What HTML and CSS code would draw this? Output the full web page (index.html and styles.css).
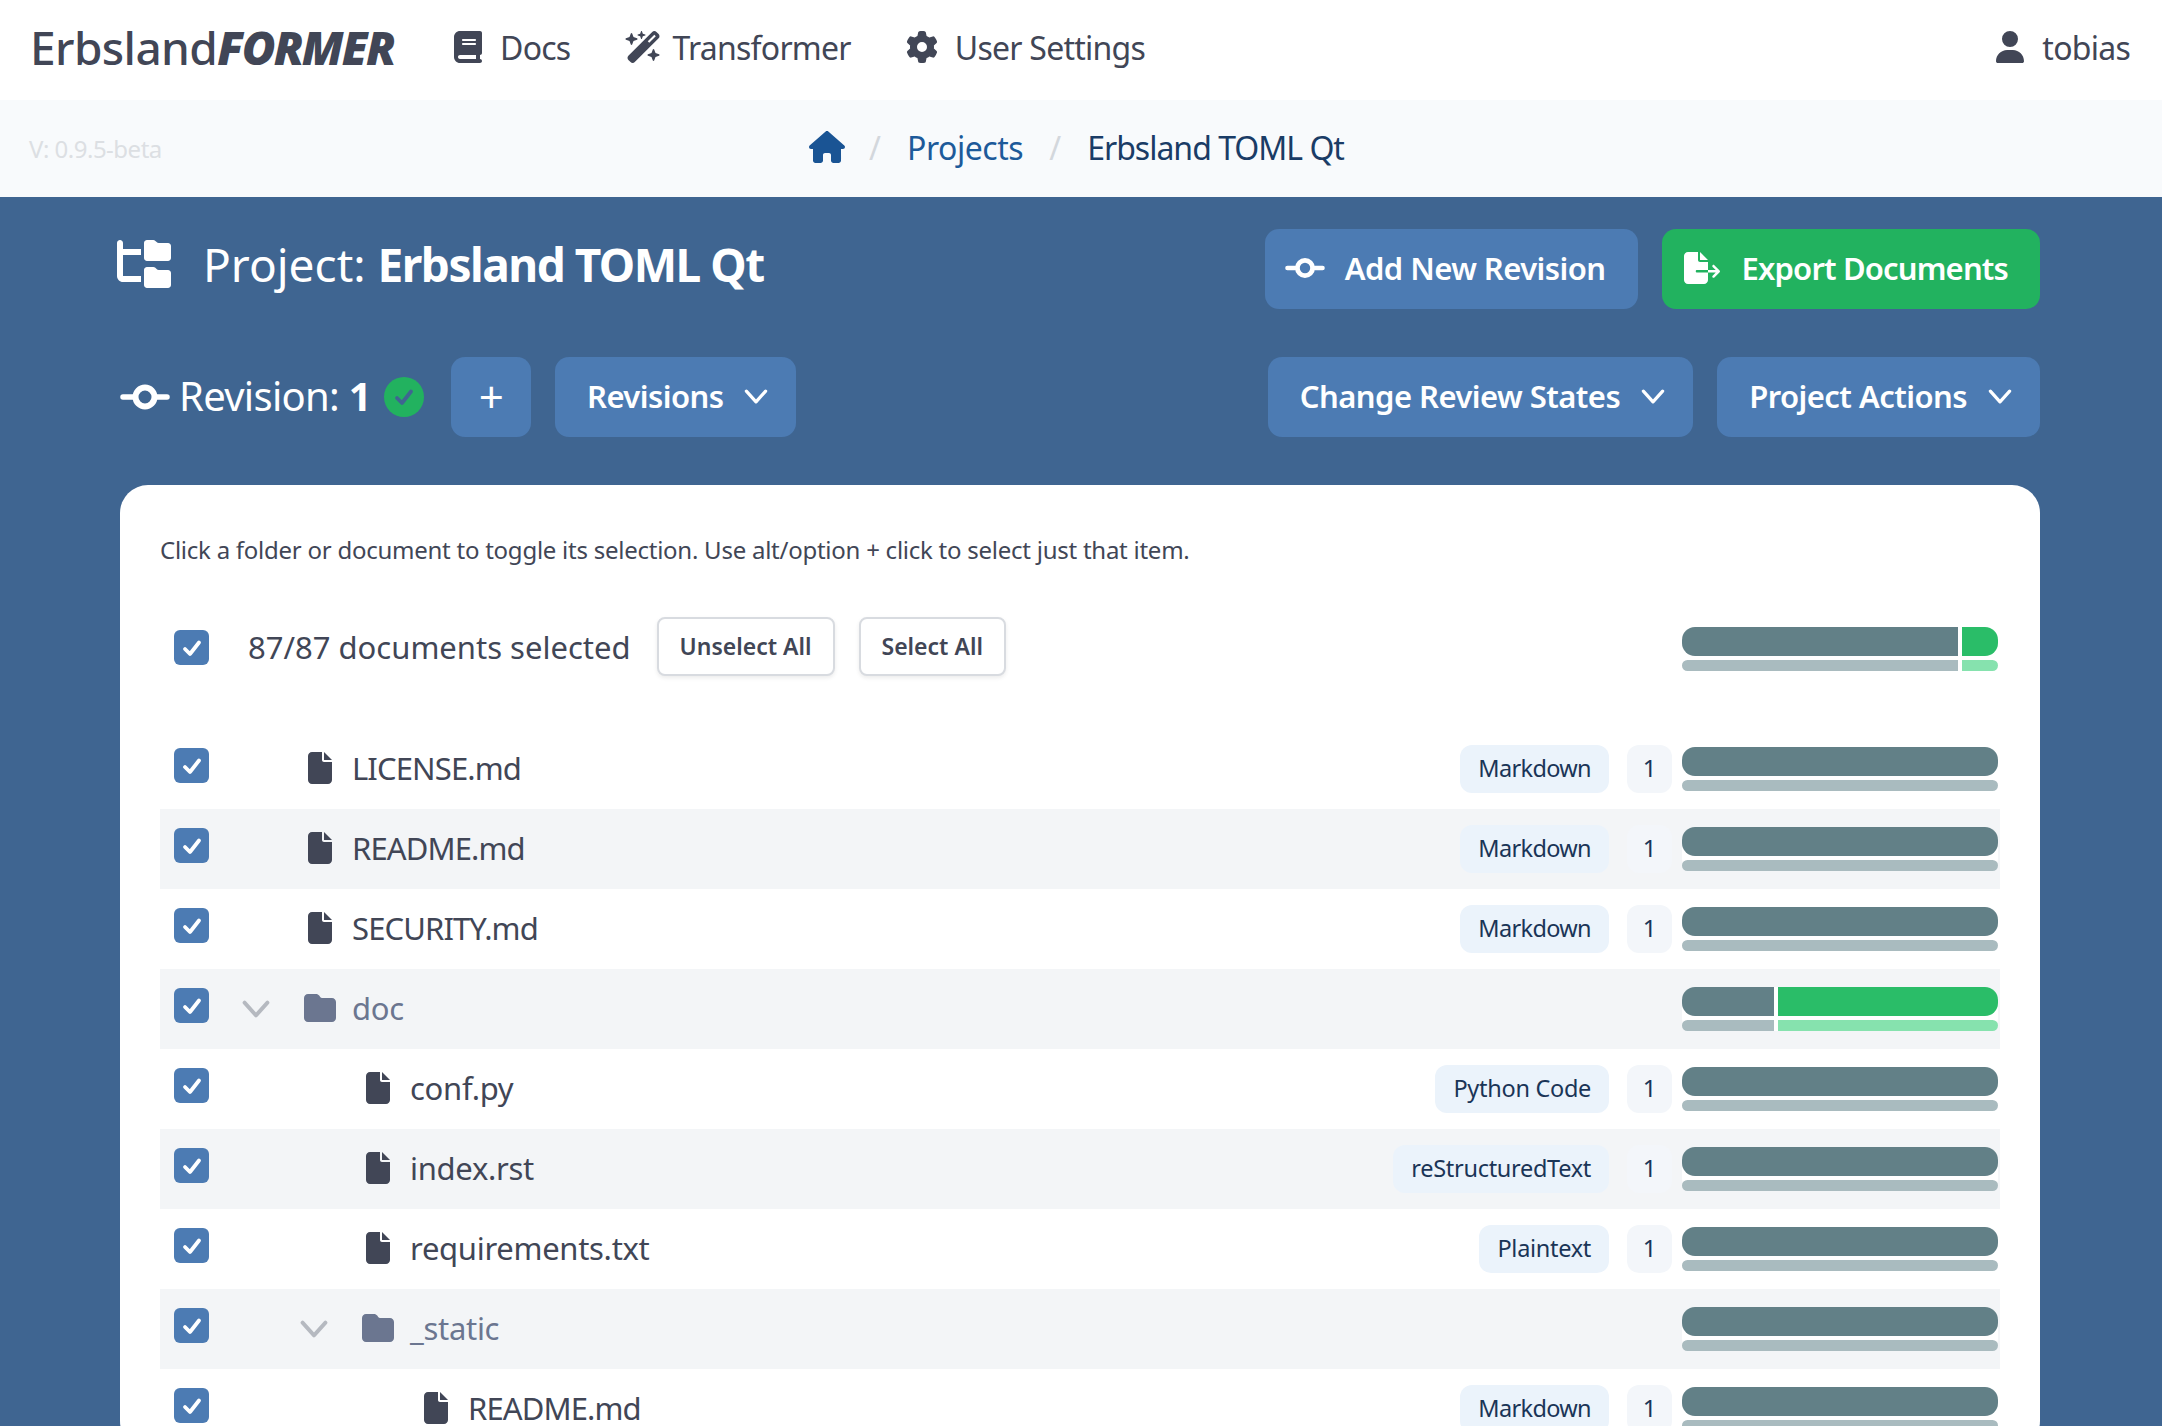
FILE: index.html
```html
<!DOCTYPE html>
<html lang="en">
<head>
    <meta charset="UTF-8">
    <meta name="viewport" content="width=device-width, initial-scale=1.0">
    <title>Erbsland TOML Qt</title>
    <link rel="stylesheet" href="styles.css">
</head>
<body>
    <svg class="icon-sheet" aria-hidden="true">
        <symbol id="i-book" viewBox="0 0 448 512"><path d="M96 0C43 0 0 43 0 96V416c0 53 43 96 96 96H384h32c17.7 0 32-14.3 32-32s-14.3-32-32-32V384c17.7 0 32-14.3 32-32V32c0-17.7-14.3-32-32-32H384 96zm0 384H352v64H96c-17.7 0-32-14.3-32-32s14.3-32 32-32zm32-240c0-8.8 7.2-16 16-16H336c8.8 0 16 7.2 16 16s-7.2 16-16 16H144c-8.8 0-16-7.2-16-16zm16 48H336c8.8 0 16 7.2 16 16s-7.2 16-16 16H144c-8.8 0-16-7.2-16-16s7.2-16 16-16z"/></symbol>
        <symbol id="i-wand" viewBox="0 0 576 512"><path d="M234.7 42.7L197 56.8c-3 1.1-5 4-5 7.2s2 6.1 5 7.2l37.7 14.1L248.8 123c1.1 3 4 5 7.2 5s6.1-2 7.2-5l14.1-37.7L315 71.2c3-1.1 5-4 5-7.2s-2-6.1-5-7.2L277.3 42.7 263.2 5c-1.1-3-4-5-7.2-5s-6.1 2-7.2 5L234.7 42.7zM46.1 395.4c-18.7 18.7-18.7 49.1 0 67.9l34.6 34.6c18.7 18.7 49.1 18.7 67.9 0L529.9 116.5c18.7-18.7 18.7-49.1 0-67.9L495.3 14.1c-18.7-18.7-49.1-18.7-67.9 0L46.1 395.4zM484.6 82.6l-105 105-23.3-23.3 105-105 23.3 23.3zM7.5 117.2C3 118.9 0 123.2 0 128s3 9.1 7.5 10.8L64 160l21.2 56.5c1.7 4.5 6 7.5 10.8 7.5s9.1-3 10.8-7.5L128 160l56.5-21.2c4.5-1.7 7.5-6 7.5-10.8s-3-9.1-7.5-10.8L128 96 106.8 39.5C105.1 35 100.8 32 96 32s-9.1 3-10.8 7.5L64 96 7.5 117.2zm352 256c-4.5 1.7-7.5 6-7.5 10.8s3 9.1 7.5 10.8L416 416l21.2 56.5c1.7 4.5 6 7.5 10.8 7.5s9.1-3 10.8-7.5L480 416l56.5-21.2c4.5-1.7 7.5-6 7.5-10.8s-3-9.1-7.5-10.8L480 352l-21.2-56.5c-1.7-4.5-6-7.5-10.8-7.5s-9.1 3-10.8 7.5L416 352l-56.5 21.2z"/></symbol>
        <symbol id="i-gear" viewBox="0 0 512 512"><path d="M495.9 166.6c3.2 8.7 .5 18.4-6.4 24.6l-43.3 39.4c1.1 8.3 1.7 16.8 1.7 25.4s-.6 17.1-1.7 25.4l43.3 39.4c6.9 6.2 9.6 15.9 6.4 24.6c-4.4 11.9-9.7 23.3-15.8 34.3l-4.7 8.1c-6.6 11-14 21.4-22.1 31.2c-5.9 7.2-15.7 9.6-24.5 6.8l-55.7-17.7c-13.4 10.3-28.2 18.9-44 25.4l-12.5 57.1c-2 9.1-9 16.3-18.2 17.8c-13.8 2.3-28 3.5-42.5 3.5s-28.7-1.2-42.5-3.5c-9.2-1.5-16.2-8.7-18.2-17.8l-12.5-57.1c-15.8-6.5-30.6-15.1-44-25.4L83.1 425.9c-8.8 2.8-18.6 .3-24.5-6.8c-8.1-9.8-15.5-20.2-22.1-31.2l-4.7-8.1c-6.1-11-11.4-22.4-15.8-34.3c-3.2-8.7-.5-18.4 6.4-24.6l43.3-39.4C64.6 273.1 64 264.6 64 256s.6-17.1 1.7-25.4L22.4 191.2c-6.9-6.2-9.6-15.9-6.4-24.6c4.4-11.9 9.7-23.3 15.8-34.3l4.7-8.1c6.6-11 14-21.4 22.1-31.2c5.9-7.2 15.7-9.6 24.5-6.8l55.7 17.7c13.4-10.3 28.2-18.9 44-25.4l12.5-57.1c2-9.1 9-16.3 18.2-17.8C227.3 1.2 241.5 0 256 0s28.7 1.2 42.5 3.5c9.2 1.5 16.2 8.7 18.2 17.8l12.5 57.1c15.8 6.5 30.6 15.1 44 25.4l55.7-17.7c8.8-2.8 18.6-.3 24.5 6.8c8.1 9.8 15.5 20.2 22.1 31.2l4.7 8.1c6.1 11 11.4 22.4 15.8 34.3zM256 336a80 80 0 1 0 0-160 80 80 0 1 0 0 160z"/></symbol>
        <symbol id="i-user" viewBox="0 0 448 512"><path d="M224 256A128 128 0 1 0 224 0a128 128 0 1 0 0 256zm-45.7 48C79.8 304 0 383.8 0 482.3C0 498.7 13.3 512 29.7 512H418.3c16.4 0 29.7-13.3 29.7-29.7C448 383.8 368.2 304 269.7 304H178.3z"/></symbol>
        <symbol id="i-home" viewBox="0 0 576 512"><path d="M575.8 255.5c0 18-15 32.1-32 32.1h-32l.7 160.2c0 2.7-.2 5.4-.5 8.1V472c0 22.1-17.9 40-40 40H456c-1.1 0-2.2 0-3.3-.1c-1.4 .1-2.8 .1-4.2 .1H416 392c-22.1 0-40-17.9-40-40V448 384c0-17.7-14.3-32-32-32H256c-17.7 0-32 14.3-32 32v64 24c0 22.1-17.9 40-40 40H160 128.1c-1.5 0-3-.1-4.5-.2c-1.2 .1-2.4 .2-3.6 .2H104c-22.1 0-40-17.9-40-40V360c0-.9 0-1.9 .1-2.8V287.6H32c-18 0-32-14-32-32.1c0-9 3-17 10-24L266.4 8c7-7 15-8 22-8s15 2 21 7L564.8 231.5c8 7 12 15 11 24z"/></symbol>
        <symbol id="i-tree" viewBox="0 0 576 512"><path d="M64 32C64 14.3 49.7 0 32 0S0 14.3 0 32v96V384c0 35.3 28.7 64 64 64H256V384H64V160H256V96H64V32zM288 192c0 17.7 14.3 32 32 32H544c17.7 0 32-14.3 32-32V64c0-17.7-14.3-32-32-32H445.3c-8.5 0-16.6-3.4-22.6-9.4L409.4 9.4c-6-6-14.1-9.4-22.6-9.4H320c-17.7 0-32 14.3-32 32V192zm0 288c0 17.7 14.3 32 32 32H544c17.7 0 32-14.3 32-32V352c0-17.7-14.3-32-32-32H445.3c-8.5 0-16.6-3.4-22.6-9.4l-13.3-13.3c-6-6-14.1-9.4-22.6-9.4H320c-17.7 0-32 14.3-32 32V480z"/></symbol>
        <symbol id="i-export" viewBox="0 0 576 512"><path d="M0 64C0 28.7 28.7 0 64 0H224V128c0 17.7 14.3 32 32 32H384V288H208c-11 0-20 9-20 20s9 20 20 20H384V448c0 35.3-28.7 64-64 64H64c-35.3 0-64-28.7-64-64V64zM384 328V288H508l-50-50c-8-8-8-20 0-28s20-8 28 0l84 84c8 8 8 20 0 28l-84 84c-8 8-20 8-28 0s-8-20 0-28l50-50H384zm0-200H256V0L384 128z"/></symbol>
        <symbol id="i-file" viewBox="0 0 384 512"><path d="M0 64C0 28.7 28.7 0 64 0H224V128c0 17.7 14.3 32 32 32H384V448c0 35.3-28.7 64-64 64H64c-35.3 0-64-28.7-64-64V64zm384 64H256V0L384 128z"/></symbol>
        <symbol id="i-folder" viewBox="0 0 512 512"><path d="M64 480H448c35.3 0 64-28.7 64-64V160c0-35.3-28.7-64-64-64H288c-10.1 0-19.6-4.7-25.6-12.8L243.2 57.6C231.1 41.5 212.1 32 192 32H64C28.7 32 0 60.7 0 96V416c0 35.3 28.7 64 64 64z"/></symbol>
        <symbol id="i-commit" viewBox="0 0 50 32"><path d="M3 16H13M37 16H47" fill="none" stroke="currentColor" stroke-width="5.500" stroke-linecap="round"/><circle cx="25" cy="16" r="9.500" fill="none" stroke="currentColor" stroke-width="6"/></symbol>
        <symbol id="i-chevron" viewBox="1 1 22 14"><path d="M3 3L12 13L21 3" fill="none" stroke="currentColor" stroke-width="3" stroke-linecap="round" stroke-linejoin="round"/></symbol>
        <symbol id="i-check" viewBox="0 0 20 20"><path d="M3 11L8 16L17 4.500" fill="none" stroke="currentColor" stroke-width="3.800" stroke-linecap="round" stroke-linejoin="round"/></symbol>
    </svg>

    <!-- top navigation -->
    <nav class="topnav">
        <a class="brand">Erbsland<b>FORMER</b></a>
        <a class="nav-link"><svg class="nav-icon book"><use href="#i-book"/></svg>Docs</a>
        <a class="nav-link"><svg class="nav-icon wand"><use href="#i-wand"/></svg>Transformer</a>
        <a class="nav-link"><svg class="nav-icon gear"><use href="#i-gear"/></svg>User Settings</a>
        <a class="nav-link nav-user"><svg class="nav-icon book"><use href="#i-user"/></svg>tobias</a>
    </nav>

    <!-- breadcrumbs -->
    <div class="crumbbar">
        <span class="version">V: 0.9.5-beta</span>
        <div class="crumbs">
            <svg class="crumb-home"><use href="#i-home"/></svg>
            <span class="crumb-sep">/</span>
            <a class="crumb-link">Projects</a>
            <span class="crumb-sep">/</span>
            <span class="crumb-current">Erbsland TOML Qt</span>
        </div>
    </div>

    <main class="project">
        <div class="toolbar">
            <h1 class="project-title"><svg class="title-icon"><use href="#i-tree"/></svg>Project:&nbsp;<b>Erbsland TOML Qt</b></h1>
            <div class="toolbar-buttons">
                <button class="btn btn-icon"><svg class="btn-commit"><use href="#i-commit"/></svg>Add New Revision</button>
                <button class="btn btn-green"><svg class="btn-export"><use href="#i-export"/></svg>Export Documents</button>
            </div>
        </div>

        <div class="toolbar">
            <div class="revision">
                <svg class="revision-icon"><use href="#i-commit"/></svg>
                <span class="revision-label">Revision: <b>1</b></span>
                <span class="revision-ok"><svg><use href="#i-check"/></svg></span>
                <button class="btn btn-plus">+</button>
                <button class="btn">Revisions<svg class="btn-chevron"><use href="#i-chevron"/></svg></button>
            </div>
            <div class="toolbar-buttons">
                <button class="btn">Change Review States<svg class="btn-chevron"><use href="#i-chevron"/></svg></button>
                <button class="btn">Project Actions<svg class="btn-chevron"><use href="#i-chevron"/></svg></button>
            </div>
        </div>

        <section class="card">
            <p class="hint">Click a folder or document to toggle its selection. Use alt/option + click to select just that item.</p>

            <div class="summary">
                <span class="check"><svg><use href="#i-check"/></svg></span>
                <span class="summary-text">87/87 documents selected</span>
                <button class="btn-light">Unselect All</button>
                <button class="btn-light">Select All</button>
                <div class="bar">
                    <div class="bar-main"><i class="seg" style="width: 87.3%"></i><i class="seg seg-done"></i></div>
                    <div class="bar-sub"><i class="seg" style="width: 87.3%"></i><i class="seg seg-done"></i></div>
                </div>
            </div>

            <div class="tree">
                <div class="row">
                    <span class="check"><svg><use href="#i-check"/></svg></span>
                    <span class="twist"></span>
                    <svg class="file-icon"><use href="#i-file"/></svg>
                    <span class="name name-caps">LICENSE.md</span>
                    <span class="type type-md">Markdown</span><span class="count">1</span>
                    <div class="bar"><div class="bar-main"><i class="seg"></i></div><div class="bar-sub"><i class="seg"></i></div></div>
                </div>
                <div class="row">
                    <span class="check"><svg><use href="#i-check"/></svg></span>
                    <span class="twist"></span>
                    <svg class="file-icon"><use href="#i-file"/></svg>
                    <span class="name name-caps">README.md</span>
                    <span class="type type-md">Markdown</span><span class="count">1</span>
                    <div class="bar"><div class="bar-main"><i class="seg"></i></div><div class="bar-sub"><i class="seg"></i></div></div>
                </div>
                <div class="row">
                    <span class="check"><svg><use href="#i-check"/></svg></span>
                    <span class="twist"></span>
                    <svg class="file-icon"><use href="#i-file"/></svg>
                    <span class="name name-caps">SECURITY.md</span>
                    <span class="type type-md">Markdown</span><span class="count">1</span>
                    <div class="bar"><div class="bar-main"><i class="seg"></i></div><div class="bar-sub"><i class="seg"></i></div></div>
                </div>
                <div class="row row-folder">
                    <span class="check"><svg><use href="#i-check"/></svg></span>
                    <span class="twist"><svg><use href="#i-chevron"/></svg></span>
                    <svg class="folder-icon"><use href="#i-folder"/></svg>
                    <span class="name">doc</span>
                    <div class="bar"><div class="bar-main"><i class="seg" style="width: 29.1%"></i><i class="seg seg-done"></i></div><div class="bar-sub"><i class="seg" style="width: 29.1%"></i><i class="seg seg-done"></i></div></div>
                </div>
                <div class="row level-1">
                    <span class="check"><svg><use href="#i-check"/></svg></span>
                    <span class="twist"></span>
                    <svg class="file-icon"><use href="#i-file"/></svg>
                    <span class="name">conf.py</span>
                    <span class="type">Python Code</span><span class="count">1</span>
                    <div class="bar"><div class="bar-main"><i class="seg"></i></div><div class="bar-sub"><i class="seg"></i></div></div>
                </div>
                <div class="row level-1">
                    <span class="check"><svg><use href="#i-check"/></svg></span>
                    <span class="twist"></span>
                    <svg class="file-icon"><use href="#i-file"/></svg>
                    <span class="name">index.rst</span>
                    <span class="type">reStructuredText</span><span class="count">1</span>
                    <div class="bar"><div class="bar-main"><i class="seg"></i></div><div class="bar-sub"><i class="seg"></i></div></div>
                </div>
                <div class="row level-1">
                    <span class="check"><svg><use href="#i-check"/></svg></span>
                    <span class="twist"></span>
                    <svg class="file-icon"><use href="#i-file"/></svg>
                    <span class="name">requirements.txt</span>
                    <span class="type">Plaintext</span><span class="count">1</span>
                    <div class="bar"><div class="bar-main"><i class="seg"></i></div><div class="bar-sub"><i class="seg"></i></div></div>
                </div>
                <div class="row row-folder level-1">
                    <span class="check"><svg><use href="#i-check"/></svg></span>
                    <span class="twist"><svg><use href="#i-chevron"/></svg></span>
                    <svg class="folder-icon"><use href="#i-folder"/></svg>
                    <span class="name">_static</span>
                    <div class="bar"><div class="bar-main"><i class="seg"></i></div><div class="bar-sub"><i class="seg"></i></div></div>
                </div>
                <div class="row level-2">
                    <span class="check"><svg><use href="#i-check"/></svg></span>
                    <span class="twist"></span>
                    <svg class="file-icon"><use href="#i-file"/></svg>
                    <span class="name name-caps">README.md</span>
                    <span class="type type-md">Markdown</span><span class="count">1</span>
                    <div class="bar"><div class="bar-main"><i class="seg"></i></div><div class="bar-sub"><i class="seg"></i></div></div>
                </div>
            </div>
        </section>
    </main>
</body>
</html>
```

FILE: styles.css
```css
* {
    box-sizing: border-box;
}

html, body {
    height: 1426px;
    overflow: hidden;
}

body {
    margin: 0;
    font-family: "Noto Sans", "Open Sans", sans-serif;
    color: #414656;
    background-color: #3f6591;
}

.icon-sheet {
    display: none;
}

svg {
    fill: currentColor;
    flex-shrink: 0;
}

/* top navigation */
.topnav {
    height: 100px;
    background-color: #fff;
    display: flex;
    align-items: center;
    padding: 0 32px 6px 30px;
}

.brand {
    font-size: 46px;
    font-weight: 500;
    letter-spacing: -0.6px;
    margin-right: 60px;
}

.brand b {
    font-weight: 900;
    font-style: italic;
    letter-spacing: -1.8px;
}

.nav-link {
    display: flex;
    align-items: center;
    font-size: 32px;
    letter-spacing: -0.75px;
    margin-right: 55px;
}

.nav-icon {
    height: 32px;
    margin-right: 18px;
}

.nav-icon.book {
    width: 28px;
}

.nav-icon.wand {
    width: 37px;
    margin-right: 10px;
}

.nav-icon.gear {
    width: 32px;
    margin-right: 17px;
}

.nav-user {
    margin: 0 0 0 auto;
}

/* breadcrumbs */
.crumbbar {
    height: 97px;
    background-color: #f8fafc;
    position: relative;
    display: flex;
    justify-content: center;
    align-items: center;
}

.version {
    position: absolute;
    left: 29px;
    top: 32px;
    font-size: 24px;
    letter-spacing: -0.5px;
    color: #dcdfe3;
}

.crumbs {
    display: flex;
    align-items: center;
    font-size: 32px;
    gap: 24px;
    padding-bottom: 3px;
    margin-left: -9px;
}

.crumb-home {
    width: 36px;
    height: 32px;
    color: #1a5494;
}

.crumb-sep {
    color: #d3d7dc;
}

.crumb-link {
    color: #1d5a9a;
    letter-spacing: -0.45px;
    margin: 0 2px;
}

.crumb-current {
    color: #1a3c66;
    letter-spacing: -1px;
    margin-left: 2px;
}

/* project header */
.project {
    padding: 32px 122px 0 120px;
}

.toolbar {
    display: flex;
    align-items: center;
    justify-content: space-between;
    height: 80px;
    margin-bottom: 48px;
}

.project-title {
    margin: 0 0 10px -3px;
    display: flex;
    align-items: center;
    font-size: 46px;
    font-weight: 400;
    color: #fff;
}

.project-title b {
    font-weight: 700;
    letter-spacing: -1.5px;
}

.title-icon {
    width: 54px;
    height: 48px;
    margin-right: 32px;
}

.toolbar-buttons {
    display: flex;
    gap: 24px;
}

.btn {
    height: 80px;
    border: 0;
    border-radius: 14px;
    padding: 0 28px 2px 32px;
    display: flex;
    align-items: center;
    font-family: inherit;
    font-size: 31px;
    font-weight: 600;
    letter-spacing: -0.55px;
    color: #fff;
    background-color: #4c7bb3;
}

.btn-icon {
    padding: 0 32px 2px 20px;
}

.btn-green {
    background-color: #22b25f;
    padding: 0 32px 2px 22px;
    letter-spacing: -0.85px;
}

.btn-commit {
    width: 40px;
    height: 26px;
    margin-right: 20px;
}

.btn-export {
    width: 36px;
    height: 32px;
    margin-right: 22px;
}

.btn-chevron {
    width: 24px;
    height: 15px;
    margin-left: 21px;
}

.btn-plus {
    width: 80px;
    padding: 0 0 2px;
    justify-content: center;
    font-size: 44px;
    font-weight: 400;
}

.revision {
    display: flex;
    align-items: center;
    font-size: 40px;
    color: #fff;
}

.revision-label {
    letter-spacing: -0.7px;
    padding-bottom: 4px;
}

.revision b {
    font-weight: 700;
}

.revision-icon {
    width: 50px;
    height: 32px;
    margin-right: 9px;
}

.revision-ok {
    width: 40px;
    height: 40px;
    border-radius: 50%;
    background-color: #22b25f;
    color: #3f6591;
    margin: 0 27px 0 13px;
    display: flex;
    align-items: center;
    justify-content: center;
}

.revision-ok svg {
    width: 20px;
    height: 20px;
}

.revision .btn {
    margin-right: 24px;
}

/* document card */
.card {
    background-color: #fff;
    border-radius: 28px;
    padding: 40px 40px 0;
}

.hint {
    margin: 0 0 42px;
    height: 50px;
    line-height: 50px;
    font-size: 24px;
    letter-spacing: -0.25px;
}

.summary {
    display: flex;
    align-items: center;
    height: 59px;
    padding: 0 2px 0 14px;
    margin-bottom: 53px;
}

.summary .check {
    margin: 2px 39px 0 0;
}

.summary-text {
    font-size: 31px;
    margin-right: 26px;
}

.btn-light {
    height: 59px;
    margin-right: 24px;
    padding: 0 21px 2px;
    font-family: inherit;
    font-size: 23px;
    font-weight: 600;
    color: #414656;
    background-color: #fff;
    border: 2px solid #d8dbe0;
    border-radius: 8px;
    box-shadow: 0 2px 4px rgba(0, 0, 0, 0.08);
}

.check {
    width: 35px;
    height: 35px;
    background-color: #4c7bb3;
    border-radius: 6px;
    color: #fff;
    display: flex;
    align-items: center;
    justify-content: center;
    flex-shrink: 0;
}

.check svg {
    width: 20px;
    height: 20px;
}

/* progress bars */
.bar {
    width: 316px;
    background-color: #fff;
    border-radius: 13px;
    margin-left: 10px;
    flex-shrink: 0;
}

.summary .bar {
    margin: 5px 0 0 auto;
}

.bar-main,
.bar-sub {
    display: flex;
    overflow: hidden;
    gap: 4px;
}

.bar-main {
    height: 29px;
    border-radius: 13px;
}

.bar-sub {
    height: 11px;
    margin-top: 4px;
    border-radius: 6px;
}

.seg {
    display: block;
    flex: 0 0 auto;
    width: 100%;
    background-color: #628087;
}

.seg-done {
    flex: 1 1 0;
    width: auto;
    background-color: #2abd68;
}

.bar-sub .seg {
    background-color: #a9bbbf;
}

.bar-sub .seg-done {
    background-color: #86e2ae;
}

/* document tree */
.row {
    height: 80px;
    display: flex;
    align-items: center;
    padding: 0 2px 0 14px;
}

.row:nth-child(even) {
    background-color: #f3f5f7;
}

.row > .check {
    margin: -7px 0 0 0;
}

.twist {
    width: 28px;
    margin-left: 33px;
    color: #b5b9c0;
    display: flex;
}

.level-1 .twist {
    margin-left: 91px;
}

.level-2 .twist {
    margin-left: 149px;
}

.twist svg {
    width: 28px;
    height: 18px;
}

.file-icon {
    width: 24px;
    height: 32px;
    margin: -2px 20px 0 38px;
}

.folder-icon {
    width: 32px;
    height: 32px;
    margin: -2px 16px 0 34px;
    color: #6b7690;
}

.name {
    font-size: 31px;
    letter-spacing: -0.3px;
    padding-bottom: 2px;
    flex: 1;
}

.name-caps {
    letter-spacing: -0.88px;
}

.row-folder .name {
    color: #6b7690;
}

.type {
    height: 48px;
    line-height: 46px;
    padding: 0 18px;
    font-size: 23.5px;
    letter-spacing: -0.3px;
    color: #1a3557;
    background-color: #ebf3fb;
    border-radius: 12px;
}

.type-md {
    letter-spacing: -0.65px;
}

.count {
    width: 45px;
    height: 48px;
    line-height: 46px;
    margin-left: 18px;
    text-align: center;
    font-size: 24px;
    color: #1a3557;
    background-color: #f3f6fa;
    border-radius: 12px;
}
```
